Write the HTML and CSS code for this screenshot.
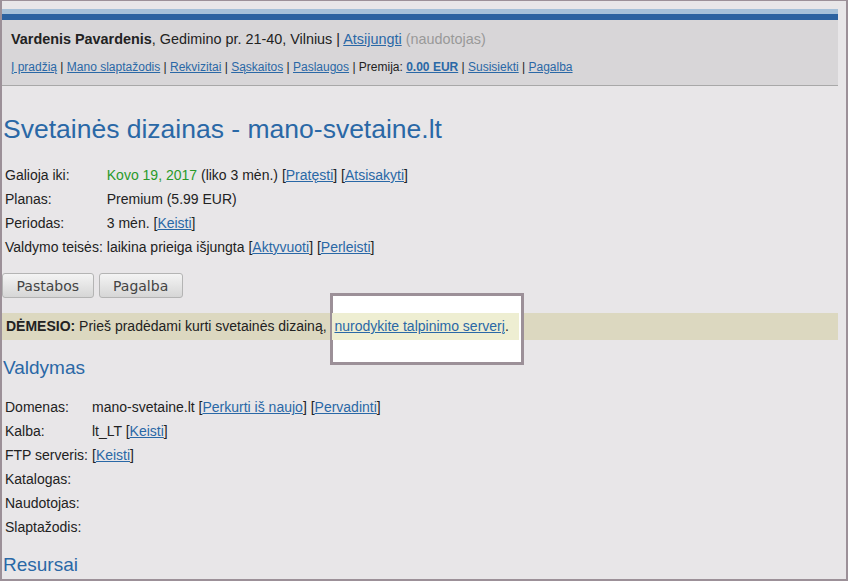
FILE: index.html
```html
<!DOCTYPE html>
<html lang="lt">
<head>
    <meta charset="UTF-8">
    <title>Svetainės dizainas - mano-svetaine.lt</title>
    <link rel="stylesheet" href="styles.css">
</head>
<body>
<div class="page">
    <div class="header">
        <div class="user-line">
            <b>Vardenis Pavardenis</b>, Gedimino pr. 21-40, Vilnius | <a href="#">Atsijungti</a> <span class="muted">(naudotojas)</span>
        </div>
        <div class="nav">
            <a href="#">Į pradžią</a> | <a href="#">Mano slaptažodis</a> | <a href="#">Rekvizitai</a> | <a href="#">Sąskaitos</a> | <a href="#">Paslaugos</a> | Premija: <a href="#" class="bold">0.00 EUR</a> | <a href="#">Susisiekti</a> | <a href="#">Pagalba</a>
        </div>
    </div>

    <h1>Svetainės dizainas - mano-svetaine.lt</h1>

    <table class="info">
        <tr><td>Galioja iki:</td><td><span class="green">Kovo 19, 2017</span> (liko 3 mėn.) [<a href="#">Pratęsti</a>] [<a href="#">Atsisakyti</a>]</td></tr>
        <tr><td>Planas:</td><td>Premium (5.99 EUR)</td></tr>
        <tr><td>Periodas:</td><td>3 mėn. [<a href="#">Keisti</a>]</td></tr>
        <tr><td>Valdymo teisės:</td><td>laikina prieiga išjungta [<a href="#">Aktyvuoti</a>] [<a href="#">Perleisti</a>]</td></tr>
    </table>

    <div class="buttons">
        <button>Pastabos</button>
        <button>Pagalba</button>
    </div>

    <div class="notice">
        <b>DĖMESIO:</b> Prieš pradėdami kurti svetainės dizainą, <span class="spot"><a href="#">nurodykite talpinimo serverį</a>.</span>
        <div class="spot-box"></div>
    </div>

    <h2>Valdymas</h2>

    <table class="info">
        <tr><td>Domenas:</td><td>mano-svetaine.lt [<a href="#">Perkurti iš naujo</a>] [<a href="#">Pervadinti</a>]</td></tr>
        <tr><td>Kalba:</td><td>lt_LT [<a href="#">Keisti</a>]</td></tr>
        <tr><td>FTP serveris:</td><td>[<a href="#">Keisti</a>]</td></tr>
        <tr><td>Katalogas:</td><td></td></tr>
        <tr><td>Naudotojas:</td><td></td></tr>
        <tr><td>Slaptažodis:</td><td></td></tr>
    </table>

    <h2 class="last">Resursai</h2>
</div>
</body>
</html>
```

FILE: styles.css
```css
html, body {
    margin: 0;
    height: 100%;
    overflow: hidden;
}

body {
    font-family: 'Liberation Sans', Arial, sans-serif;
    font-size: 14px;
    color: #222;
    background: #e8e6e8;
}

.page {
    height: 100%;
    box-sizing: border-box;
    border: 2px solid #9c9098;
    border-top-width: 1px;
    padding-top: 8px;
    overflow: hidden;
}

a {
    color: #2a68a6;
}

.header {
    margin-right: 8px;
    background: #d8d6d8;
    border-top: 5px solid #a6c0d8;
    border-bottom: 1px solid #a8a8a8;
    box-shadow: inset 0 6px 0 #2c62a0;
    padding: 16px 9px 0 9px;
    height: 55px;
}

.user-line {
    font-size: 14.4px;
    line-height: 18px;
}

.muted {
    color: #999;
}

.nav {
    margin-top: 11px;
    font-size: 12px;
    line-height: 16px;
}

.bold {
    font-weight: bold;
}

h1 {
    font-weight: normal;
    font-size: 26.5px;
    color: #2a68a6;
    margin: 28px 0 19px 1px;
    line-height: 30px;
}

h2 {
    font-weight: normal;
    font-size: 19px;
    color: #2a68a6;
    margin: 16px 0 15px 1px;
    line-height: 24px;
}

h2.last {
    margin-top: 14px;
}

.info {
    border-collapse: collapse;
    margin-left: 1px;
}

.info td {
    padding: 2px;
    line-height: 20px;
    vertical-align: top;
}

.green {
    color: #2a9a2a;
}

.buttons {
    margin: 14px 0 15px 0;
    display: flex;
    gap: 5px;
}

button {
    font-family: 'DejaVu Sans', sans-serif;
    font-size: 14px;
    color: #444;
    background: linear-gradient(#f4f4f4, #d6d6d6);
    border: 1px solid #b4b4b4;
    border-radius: 3px;
    padding: 0 13.5px;
    height: 25px;
}

.notice {
    position: relative;
    margin-right: 8px;
    background: #dcd8c0;
    padding: 0 4px;
    line-height: 27px;
}

.spot {
    position: relative;
    z-index: 2;
    display: inline-block;
    background: #eeeed2;
    margin-left: 2px;
    padding: 0 10px 0 2px;
}

.spot-box {
    position: absolute;
    left: 328px;
    top: -20px;
    width: 188px;
    height: 66px;
    background: #fff;
    border: 3px solid #9c9098;
    z-index: 1;
}
```
